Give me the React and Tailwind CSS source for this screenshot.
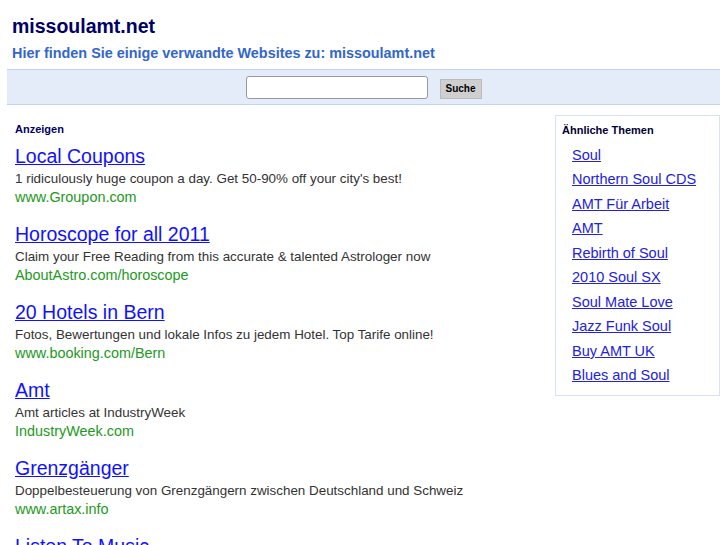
import React from "react";

const ads = [
  {
    title: "Local Coupons",
    text: "1 ridiculously huge coupon a day. Get 50-90% off your city's best!",
    url: "www.Groupon.com",
  },
  {
    title: "Horoscope for all 2011",
    text: "Claim your Free Reading from this accurate & talented Astrologer now",
    url: "AboutAstro.com/horoscope",
  },
  {
    title: "20 Hotels in Bern",
    text: "Fotos, Bewertungen und lokale Infos zu jedem Hotel. Top Tarife online!",
    url: "www.booking.com/Bern",
  },
  {
    title: "Amt",
    text: "Amt articles at IndustryWeek",
    url: "IndustryWeek.com",
  },
  {
    title: "Grenzgänger",
    text: "Doppelbesteuerung von Grenzgängern zwischen Deutschland und Schweiz",
    url: "www.artax.info",
  },
  {
    title: "Listen To Music",
    text: "Listen to music online for free",
    url: "www.music.com",
  },
];

const themes = [
  "Soul",
  "Northern Soul CDS",
  "AMT Für Arbeit",
  "AMT",
  "Rebirth of Soul",
  "2010 Soul SX",
  "Soul Mate Love",
  "Jazz Funk Soul",
  "Buy AMT UK",
  "Blues and Soul",
];

export default function App() {
  return (
    <div className="h-[545px] overflow-hidden bg-white px-[7px] font-['Liberation_Sans',Arial,sans-serif]">
      <div className="px-[5px] pt-[14px]">
        <h1 className="text-[19.5px] leading-[24px] font-bold text-[#000066]">missoulamt.net</h1>
        <h2 className="mt-[6px] text-[14.4px] leading-[18px] font-bold text-[#3366cc]">
          Hier finden Sie einige verwandte Websites zu: missoulamt.net
        </h2>
      </div>

      <div className="mt-[7px] flex h-[36px] items-center justify-center border-y border-[#c3d4f2] bg-[#e5ecf9]">
        <input
          type="text"
          className="h-[23px] w-[182px] rounded-[3px] border border-[#999] bg-white"
        />
        <button className="ml-[12px] mt-[3px] h-[20px] w-[42px] border border-[#bbb] bg-[#cfcfcf] text-[10px] font-bold text-black">
          Suche
        </button>
      </div>

      <div className="flex">
        <div className="flex-1 pl-[8px] pt-[18px]">
          <div className="text-[11px] leading-[13px] font-bold text-[#000066]">Anzeigen</div>
          <div className="mt-[7px] flex flex-col gap-[14px]">
            {ads.map((ad) => (
              <div key={ad.title}>
                <a href="#" className="block text-[19.5px] leading-[26px] text-[#1111ff] underline">
                  {ad.title}
                </a>
                <div className="text-[13.4px] leading-[19px] text-[#333]">{ad.text}</div>
                <div className="text-[14.4px] leading-[19px] text-[#229922]">{ad.url}</div>
              </div>
            ))}
          </div>
        </div>

        <div className="mt-[10px] w-[165px] self-start border border-[#d6e2f8] pb-[7px] pl-[6px] pt-[8px]">
          <div className="text-[11px] leading-[13px] font-bold text-[#000033]">Ähnliche Themen</div>
          <div className="mt-[6px] flex flex-col pl-[10px]">
            {themes.map((t) => (
              <a key={t} href="#" className="text-[14.5px] leading-[24.45px] text-[#2222dd] underline">
                {t}
              </a>
            ))}
          </div>
        </div>
      </div>
    </div>
  );
}
